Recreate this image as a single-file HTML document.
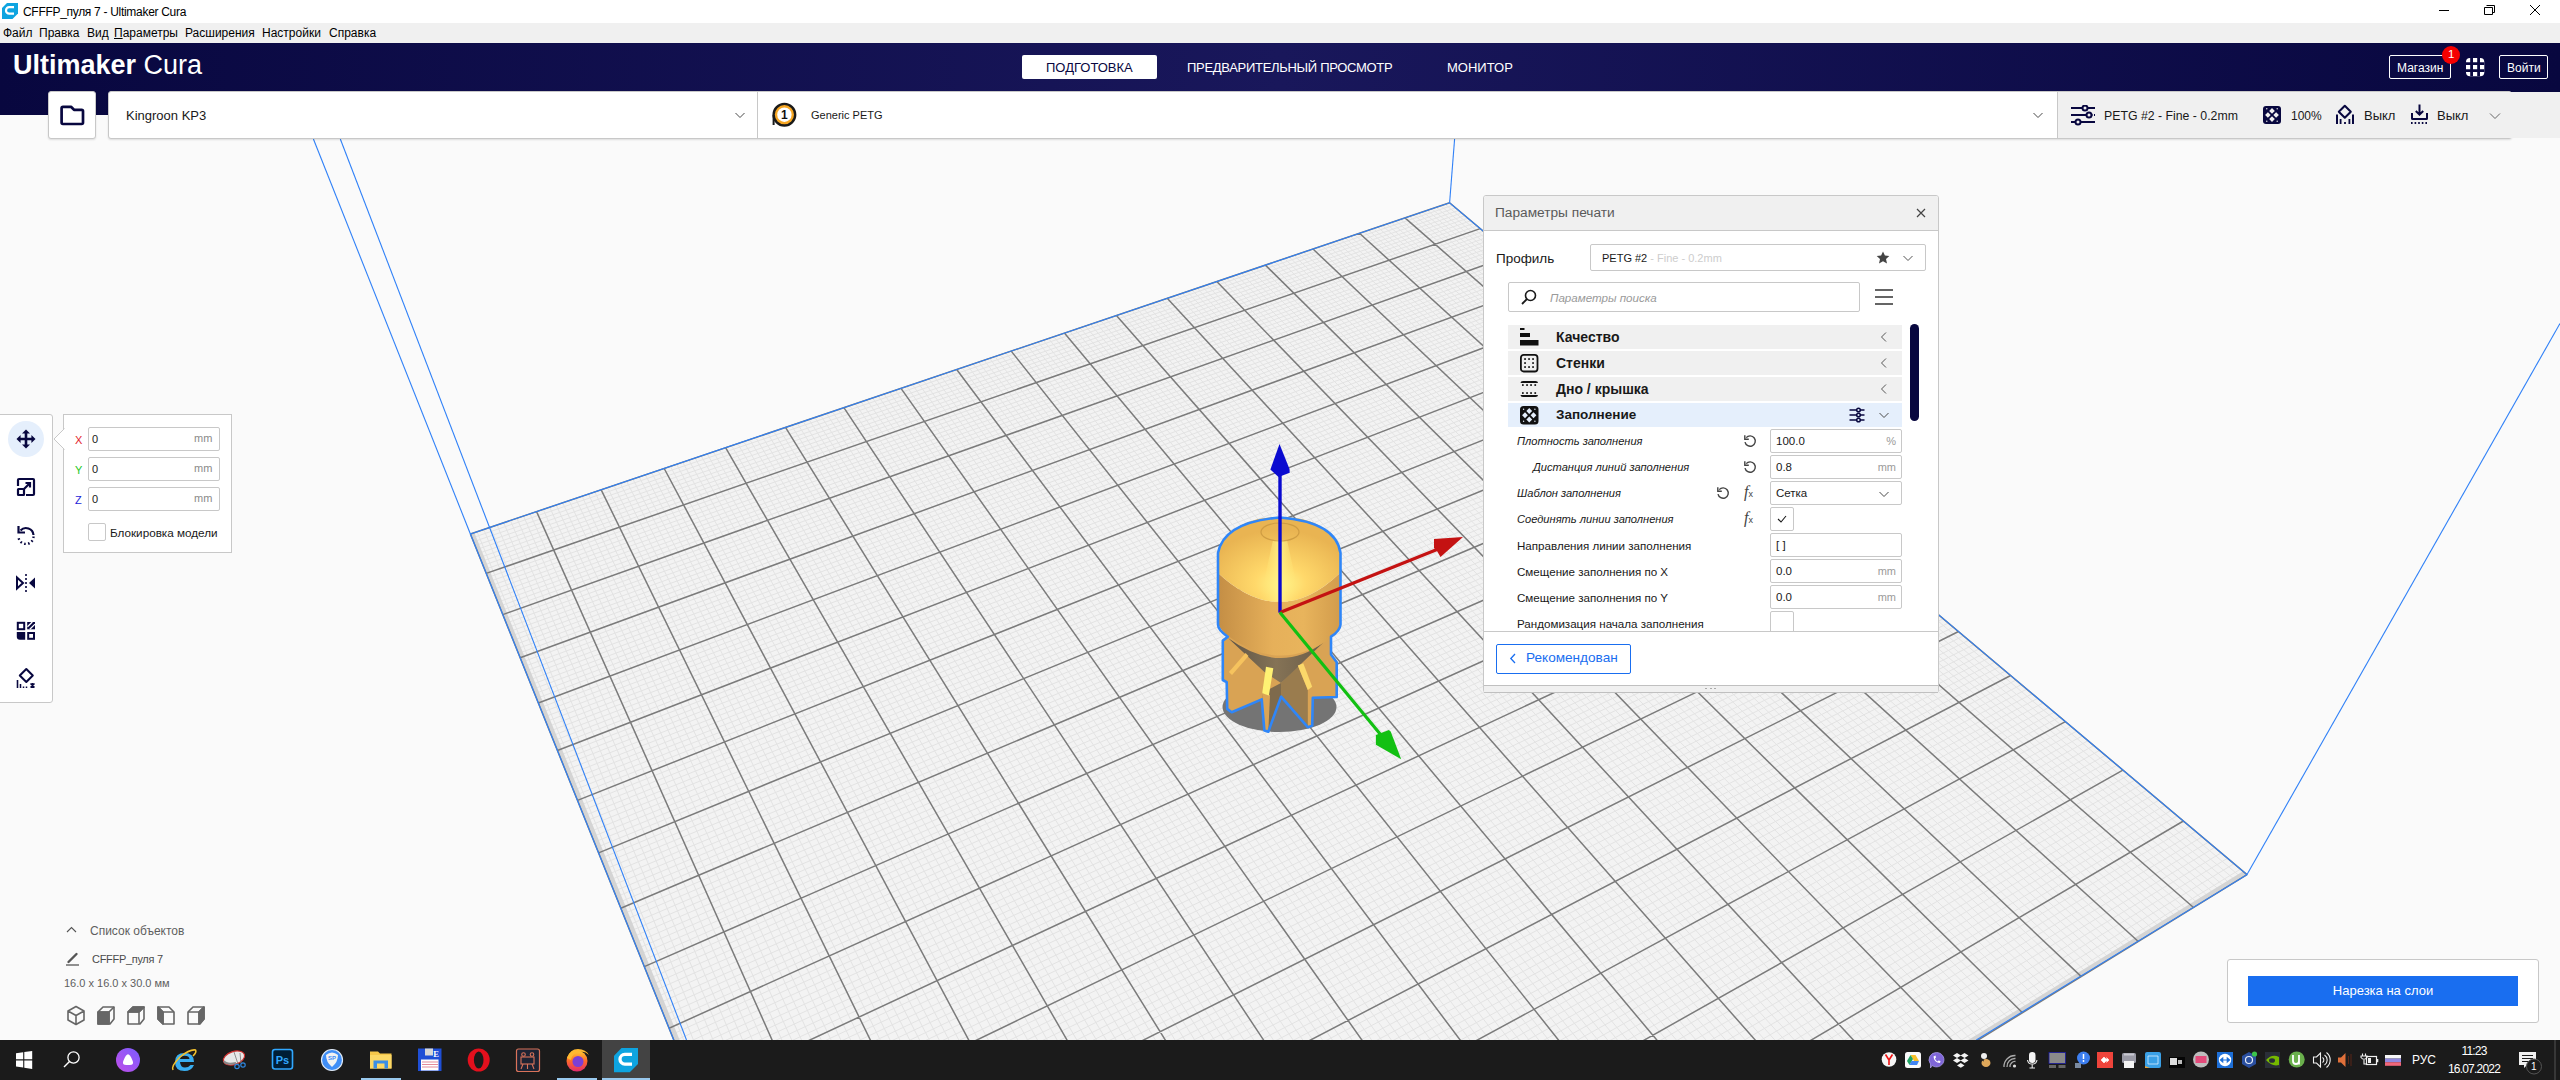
<!DOCTYPE html>
<html><head><meta charset="utf-8">
<style>
*{box-sizing:border-box;margin:0;padding:0}
html,body{width:2560px;height:1080px;overflow:hidden;background:#fafafa;font-family:"Liberation Sans",sans-serif;color:#191919}
.a{position:absolute}
.t{position:absolute;white-space:nowrap;line-height:1}
svg{display:block}
</style></head><body>
<!-- viewport -->
<svg class="a" style="left:0;top:0" width="2560" height="1080" viewBox="0 0 2560 1080">
 <rect x="0" y="0" width="2560" height="1080" fill="#fafafa"/>
 <polygon points="470.4,534.0 1449.6,202.8 2247.0,874.6 932.5,1683.6" fill="#f3f3f3"/>
 <path d="M477.1 531.7L942.6 1677.4M472.0 537.9L1452.6 205.3M483.8 529.5L952.7 1671.2M473.5 541.7L1455.6 207.9M490.5 527.2L962.7 1665.0M475.1 545.6L1458.7 210.4M497.1 525.0L972.7 1658.9M476.7 549.5L1461.7 213.0M503.7 522.7L982.6 1652.8M478.2 553.5L1464.8 215.6M510.4 520.5L992.5 1646.7M479.8 557.4L1467.8 218.2M516.9 518.3L1002.4 1640.6M481.4 561.4L1470.9 220.7M523.5 516.0L1012.2 1634.6M483.0 565.4L1474.0 223.3M530.1 513.8L1021.9 1628.6M484.6 569.4L1477.1 226.0M543.2 509.4L1041.3 1616.6M487.9 577.4L1483.3 231.2M549.7 507.2L1051.0 1610.7M489.5 581.5L1486.5 233.8M556.2 505.0L1060.6 1604.8M491.1 585.6L1489.6 236.5M562.7 502.8L1070.2 1598.9M492.8 589.7L1492.8 239.2M569.1 500.6L1079.7 1593.0M494.4 593.8L1495.9 241.8M575.6 498.4L1089.2 1587.2M496.1 597.9L1499.1 244.5M582.0 496.2L1098.6 1581.4M497.8 602.1L1502.3 247.2M588.4 494.1L1108.0 1575.6M499.4 606.2L1505.5 249.9M594.8 491.9L1117.4 1569.8M501.1 610.4L1508.7 252.6M607.6 487.6L1136.0 1558.3M504.5 618.8L1515.2 258.0M613.9 485.5L1145.3 1552.6M506.2 623.1L1518.4 260.8M620.3 483.3L1154.5 1547.0M507.9 627.4L1521.7 263.5M626.6 481.2L1163.7 1541.3M509.6 631.6L1525.0 266.3M632.9 479.0L1172.8 1535.7M511.4 635.9L1528.2 269.1M639.2 476.9L1181.9 1530.1M513.1 640.3L1531.5 271.8M645.4 474.8L1191.0 1524.5M514.9 644.6L1534.9 274.6M651.7 472.7L1200.0 1519.0M516.6 649.0L1538.2 277.4M657.9 470.6L1209.0 1513.4M518.4 653.4L1541.5 280.2M670.4 466.4L1226.9 1502.4M521.9 662.2L1548.2 285.9M676.6 464.3L1235.8 1497.0M523.7 666.7L1551.6 288.7M682.7 462.2L1244.6 1491.5M525.5 671.1L1555.0 291.6M688.9 460.1L1253.4 1486.1M527.3 675.6L1558.4 294.5M695.1 458.0L1262.2 1480.7M529.1 680.1L1561.8 297.3M701.2 455.9L1271.0 1475.3M531.0 684.7L1565.2 300.2M707.3 453.9L1279.7 1469.9M532.8 689.2L1568.7 303.1M713.4 451.8L1288.3 1464.6M534.6 693.8L1572.1 306.0M719.5 449.7L1297.0 1459.3M536.5 698.4L1575.6 308.9M731.6 445.6L1314.2 1448.7M540.2 707.7L1582.6 314.8M737.7 443.6L1322.7 1443.5M542.1 712.3L1586.1 317.8M743.7 441.6L1331.2 1438.2M544.0 717.0L1589.6 320.7M749.7 439.5L1339.7 1433.0M545.9 721.7L1593.1 323.7M755.7 437.5L1348.1 1427.8M547.8 726.5L1596.7 326.7M761.7 435.5L1356.5 1422.6M549.7 731.2L1600.2 329.7M767.7 433.5L1364.9 1417.5M551.6 736.0L1603.8 332.7M773.6 431.4L1373.2 1412.4M553.5 740.8L1607.4 335.7M779.5 429.4L1381.5 1407.3M555.5 745.7L1611.0 338.8M791.4 425.4L1398.0 1397.1M559.4 755.4L1618.2 344.9M797.3 423.4L1406.2 1392.0M561.4 760.3L1621.9 347.9M803.2 421.4L1414.4 1387.0M563.3 765.2L1625.5 351.0M809.0 419.5L1422.6 1382.0M565.3 770.2L1629.2 354.1M814.9 417.5L1430.7 1377.0M567.3 775.1L1632.9 357.2M820.7 415.5L1438.8 1372.0M569.3 780.1L1636.6 360.3M826.5 413.5L1446.8 1367.1M571.4 785.2L1640.3 363.5M832.4 411.6L1454.8 1362.1M573.4 790.2L1644.1 366.6M838.2 409.6L1462.8 1357.2M575.4 795.3L1647.8 369.8M849.7 405.7L1478.7 1347.4M579.5 805.5L1655.3 376.1M855.5 403.8L1486.6 1342.6M581.6 810.7L1659.1 379.3M861.2 401.8L1494.5 1337.7M583.7 815.9L1662.9 382.5M866.9 399.9L1502.3 1332.9M585.8 821.1L1666.8 385.8M872.6 397.9L1510.2 1328.1M587.9 826.3L1670.6 389.0M878.3 396.0L1517.9 1323.3M590.0 831.6L1674.5 392.2M884.0 394.1L1525.7 1318.5M592.1 836.9L1678.3 395.5M889.7 392.2L1533.4 1313.8M594.3 842.2L1682.2 398.8M895.4 390.3L1541.1 1309.0M596.4 847.5L1686.1 402.1M906.6 386.4L1556.4 1299.6M600.8 858.3L1694.0 408.7M912.3 384.5L1564.0 1294.9M602.9 863.7L1697.9 412.0M917.9 382.6L1571.6 1290.3M605.1 869.2L1701.9 415.3M923.5 380.8L1579.2 1285.6M607.3 874.7L1705.9 418.7M929.0 378.9L1586.7 1281.0M609.6 880.2L1709.9 422.1M934.6 377.0L1594.2 1276.4M611.8 885.7L1713.9 425.5M940.2 375.1L1601.7 1271.8M614.0 891.3L1717.9 428.9M945.7 373.2L1609.1 1267.2M616.3 896.9L1722.0 432.3M951.2 371.4L1616.5 1262.6M618.5 902.6L1726.0 435.7M962.2 367.6L1631.3 1253.6M623.1 913.9L1734.2 442.6M967.7 365.8L1638.6 1249.0M625.4 919.6L1738.3 446.1M973.2 363.9L1645.9 1244.5M627.7 925.4L1742.5 449.5M978.7 362.1L1653.2 1240.1M630.1 931.2L1746.6 453.0M984.1 360.2L1660.4 1235.6M632.4 937.0L1750.8 456.5M989.6 358.4L1667.7 1231.1M634.7 942.9L1755.0 460.1M995.0 356.6L1674.9 1226.7M637.1 948.7L1759.2 463.6M1000.4 354.7L1682.0 1222.3M639.5 954.6L1763.4 467.2M1005.8 352.9L1689.2 1217.9M641.9 960.6L1767.6 470.7M1016.6 349.3L1703.4 1209.1M646.7 972.6L1776.2 477.9M1021.9 347.5L1710.5 1204.8M649.1 978.6L1780.5 481.6M1027.3 345.6L1717.5 1200.5M651.6 984.7L1784.8 485.2M1032.6 343.8L1724.6 1196.1M654.0 990.8L1789.1 488.8M1037.9 342.0L1731.6 1191.8M656.5 997.0L1793.5 492.5M1043.2 340.2L1738.5 1187.5M659.0 1003.1L1797.8 496.2M1048.5 338.5L1745.5 1183.3M661.5 1009.4L1802.2 499.9M1053.8 336.7L1752.4 1179.0M664.0 1015.6L1806.6 503.6M1059.1 334.9L1759.3 1174.8M666.5 1021.9L1811.1 507.3M1069.6 331.3L1773.0 1166.3M671.6 1034.6L1820.0 514.8M1074.9 329.5L1779.8 1162.1M674.2 1041.0L1824.4 518.6M1080.1 327.8L1786.6 1157.9M676.8 1047.4L1829.0 522.4M1085.3 326.0L1793.4 1153.8M679.4 1053.9L1833.5 526.2M1090.5 324.3L1800.2 1149.6M682.0 1060.4L1838.0 530.0M1095.7 322.5L1806.9 1145.5M684.6 1066.9L1842.6 533.9M1100.9 320.7L1813.6 1141.3M687.3 1073.5L1847.2 537.7M1106.0 319.0L1820.3 1137.2M689.9 1080.1L1851.8 541.6M1111.2 317.3L1826.9 1133.1M692.6 1086.8L1856.4 545.5M1121.5 313.8L1840.2 1125.0M698.0 1100.2L1865.7 553.4M1126.6 312.0L1846.8 1120.9M700.7 1107.0L1870.4 557.3M1131.7 310.3L1853.4 1116.9M703.5 1113.8L1875.1 561.3M1136.8 308.6L1859.9 1112.8M706.2 1120.6L1879.8 565.3M1141.9 306.9L1866.4 1108.8M709.0 1127.5L1884.6 569.3M1147.0 305.2L1872.9 1104.8M711.8 1134.5L1889.4 573.3M1152.0 303.4L1879.4 1100.8M714.6 1141.4L1894.1 577.3M1157.1 301.7L1885.9 1096.9M717.4 1148.5L1899.0 581.4M1162.1 300.0L1892.3 1092.9M720.2 1155.5L1903.8 585.5M1172.2 296.6L1905.1 1085.0M726.0 1169.8L1913.5 593.7M1177.2 294.9L1911.5 1081.1M728.8 1176.9L1918.4 597.8M1182.2 293.2L1917.8 1077.2M731.7 1184.2L1923.4 601.9M1187.2 291.6L1924.1 1073.3M734.7 1191.4L1928.3 606.1M1192.1 289.9L1930.4 1069.4M737.6 1198.8L1933.3 610.3M1197.1 288.2L1936.7 1065.6M740.6 1206.1L1938.3 614.5M1202.1 286.5L1943.0 1061.7M743.5 1213.5L1943.3 618.7M1207.0 284.9L1949.2 1057.9M746.5 1221.0L1948.3 623.0M1211.9 283.2L1955.4 1054.0M749.6 1228.5L1953.4 627.2M1221.8 279.9L1967.8 1046.4M755.6 1243.6L1963.6 635.8M1226.7 278.2L1974.0 1042.6M758.7 1251.3L1968.7 640.2M1231.5 276.6L1980.1 1038.9M761.8 1258.9L1973.9 644.5M1236.4 274.9L1986.2 1035.1M764.9 1266.7L1979.1 648.9M1241.3 273.3L1992.3 1031.4M768.0 1274.5L1984.3 653.3M1246.1 271.6L1998.4 1027.6M771.2 1282.3L1989.5 657.7M1251.0 270.0L2004.4 1023.9M774.4 1290.2L1994.8 662.1M1255.8 268.3L2010.5 1020.2M777.5 1298.1L2000.0 666.5M1260.6 266.7L2016.5 1016.5M780.8 1306.1L2005.4 671.0M1270.2 263.5L2028.4 1009.1M787.2 1322.2L2016.0 680.0M1275.0 261.8L2034.4 1005.4M790.5 1330.4L2021.4 684.6M1279.8 260.2L2040.3 1001.8M793.8 1338.5L2026.8 689.1M1284.6 258.6L2046.3 998.1M797.1 1346.8L2032.3 693.7M1289.3 257.0L2052.2 994.5M800.4 1355.1L2037.7 698.3M1294.1 255.4L2058.0 990.9M803.8 1363.4L2043.2 702.9M1298.8 253.8L2063.9 987.3M807.2 1371.8L2048.7 707.6M1303.6 252.2L2069.7 983.7M810.6 1380.3L2054.3 712.2M1308.3 250.6L2075.5 980.1M814.0 1388.8L2059.8 716.9M1317.7 247.4L2087.1 973.0M820.9 1406.0L2071.1 726.4M1322.4 245.8L2092.9 969.4M824.4 1414.7L2076.7 731.1M1327.0 244.3L2098.6 965.9M827.9 1423.4L2082.4 735.9M1331.7 242.7L2104.4 962.4M831.5 1432.2L2088.1 740.7M1336.4 241.1L2110.1 958.9M835.0 1441.1L2093.8 745.6M1341.0 239.5L2115.8 955.4M838.6 1450.0L2099.6 750.4M1345.6 238.0L2121.4 951.9M842.2 1459.0L2105.4 755.3M1350.3 236.4L2127.1 948.4M845.8 1468.0L2111.2 760.2M1354.9 234.8L2132.7 944.9M849.5 1477.1L2117.1 765.1M1364.1 231.7L2143.9 938.0M856.9 1495.5L2128.8 775.0M1368.7 230.2L2149.5 934.6M860.6 1504.8L2134.8 780.1M1373.3 228.6L2155.1 931.2M864.4 1514.2L2140.7 785.1M1377.8 227.1L2160.6 927.8M868.2 1523.6L2146.7 790.1M1382.4 225.5L2166.1 924.4M872.0 1533.1L2152.8 795.2M1386.9 224.0L2171.7 921.0M875.8 1542.6L2158.8 800.3M1391.5 222.5L2177.1 917.6M879.7 1552.2L2164.9 805.4M1396.0 220.9L2182.6 914.2M883.6 1561.9L2171.0 810.6M1400.5 219.4L2188.1 910.9M887.5 1571.6L2177.2 815.8M1409.5 216.4L2198.9 904.2M895.4 1591.4L2189.6 826.2M1414.0 214.8L2204.4 900.8M899.4 1601.3L2195.8 831.5M1418.5 213.3L2209.7 897.5M903.5 1611.3L2202.1 836.8M1423.0 211.8L2215.1 894.2M907.5 1621.4L2208.4 842.1M1427.4 210.3L2220.5 890.9M911.6 1631.6L2214.8 847.4M1431.9 208.8L2225.8 887.6M915.7 1641.9L2221.2 852.8M1436.3 207.3L2231.1 884.4M919.9 1652.2L2227.6 858.2M1440.8 205.8L2236.4 881.1M924.1 1662.6L2234.0 863.7M1445.2 204.3L2241.7 877.8M928.3 1673.1L2240.5 869.1" stroke="#e3e3e3" stroke-width="1" fill="none"/>
 <polygon points="470.4,534.0 474.4,532.7 938.5,1679.9 932.5,1683.6" fill="#d4d4d4"/><polygon points="930.0,1677.3 2243.1,871.3 2247.0,874.6 932.5,1683.6" fill="#d4d4d4"/>
 <path d="M470.4 534.0L932.5 1683.6M470.4 534.0L1449.6 202.8M536.6 511.6L1031.7 1622.6M486.2 573.4L1480.2 228.6M601.2 489.8L1126.7 1564.1M502.8 614.6L1511.9 255.3M664.2 468.5L1218.0 1507.9M520.2 657.8L1544.9 283.1M725.6 447.7L1305.6 1454.0M538.3 703.0L1579.1 311.9M785.5 427.4L1389.8 1402.2M557.4 750.5L1614.6 341.8M843.9 407.7L1470.8 1352.3M577.5 800.4L1651.6 373.0M901.0 388.4L1548.8 1304.3M598.6 852.9L1690.0 405.4M956.7 369.5L1623.9 1258.1M620.8 908.2L1730.1 439.1M1011.2 351.1L1696.3 1213.5M644.3 966.6L1771.9 474.3M1064.4 333.1L1766.2 1170.5M669.1 1028.2L1815.5 511.1M1116.4 315.5L1833.6 1129.0M695.3 1093.5L1861.0 549.4M1167.2 298.3L1898.7 1089.0M723.1 1162.6L1908.7 589.5M1216.8 281.5L1961.6 1050.2M752.6 1236.0L1958.5 631.5M1265.4 265.1L2022.5 1012.8M784.0 1314.1L2010.7 675.5M1313.0 249.0L2081.3 976.6M817.4 1397.4L2065.4 721.6M1359.5 233.3L2138.3 941.5M853.2 1486.3L2122.9 770.1M1405.0 217.9L2193.5 907.5M891.4 1581.5L2183.4 821.0M1449.6 202.8L2247.0 874.6M932.5 1683.6L2247.0 874.6" stroke="#7b7b7b" stroke-width="1.5" fill="none"/>

 <!-- model -->
 <defs>
  <radialGradient id="dome" cx="0.5" cy="0.75" r="0.6" fx="0.52" fy="0.8">
   <stop offset="0" stop-color="#fff48a"/><stop offset="0.35" stop-color="#ffd86a"/><stop offset="1" stop-color="#e9b452"/>
  </radialGradient>
  <linearGradient id="band" x1="0" y1="0" x2="1" y2="0">
   <stop offset="0" stop-color="#c48e45"/><stop offset="0.45" stop-color="#e6b05a"/><stop offset="0.7" stop-color="#e8b45c"/><stop offset="1" stop-color="#d29c4c"/>
  </linearGradient>
  <linearGradient id="hl" x1="0" y1="0" x2="1" y2="0"><stop offset="0" stop-color="#ffe070" stop-opacity="0"/><stop offset="0.5" stop-color="#fff48a"/><stop offset="1" stop-color="#ffe070" stop-opacity="0"/></linearGradient>
  <linearGradient id="cone" x1="0" y1="0" x2="1" y2="0">
   <stop offset="0" stop-color="#5e5446"/><stop offset="0.5" stop-color="#857356"/><stop offset="1" stop-color="#6a5c48"/>
  </linearGradient>
 </defs>
 <ellipse cx="1279.5" cy="707" rx="57" ry="25" fill="#747474"/>
 <path d="M1222.8 640.6L1227.8 636.7L1331 636.7V654.4L1336.7 662.2V697L1312.8 697.8L1312.2 725.6L1307.8 727.2L1281.1 696.7L1268.3 731.7L1264.4 730.6L1261.7 699.4L1231.7 712.2L1227.2 708.9L1226.7 682.2L1222.8 680Z" fill="#d9a354"/>
 <path d="M1281 683L1297.8 665.6L1307.8 690L1307.8 727.2L1281.1 696.7Z" fill="#9a7c4e"/>
 
 <path d="M1262 693L1281 683L1281.1 696.7L1268.3 731.7L1264.4 730.6Z" fill="#7e6a4c"/>
 <path d="M1262 693L1270 695L1268.3 731.7L1264.4 730.6Z" fill="#dba455"/>
 <path d="M1228 638Q1280 676 1324 642L1281 683L1264.4 672Z" fill="url(#cone)"/>
 <path d="M1228.9 672L1245.6 653L1248.5 656L1232 675Z" fill="#f6c35e"/>
 <path d="M1266 666.7L1273.3 668.3L1268.9 695.6L1262.2 693.3Z" fill="#fff173"/>
 <path d="M1297.8 665.6L1303.3 663.3L1312.2 686.7L1307.8 690Z" fill="#fbd86a"/>
 <path d="M1218 573V624Q1222 632 1228 636Q1280 674 1331 638Q1340 630 1340 624V573Q1280 631 1218 573Z" fill="url(#band)"/>
 <path d="M1218 573V553Q1224 528 1258 519Q1280 515 1302 519Q1336 528 1340 553V573Q1280 631 1218 573Z" fill="url(#dome)"/>
 <path d="M1273 540L1287 540L1300 600Q1280 603 1260 600Z" fill="url(#hl)" opacity="0.85"/>
 <ellipse cx="1280" cy="532" rx="19" ry="9" fill="none" stroke="#c8963e" stroke-width="1.2" opacity="0.8"/>
 <path d="M1280 517.5Q1336 522 1340.5 553V624.5Q1340 631 1331 636.7V654.4L1336.7 662.2V697L1312.8 697.8L1312.2 725.6L1307.8 727.2L1281.1 696.7L1268.3 731.7L1264.4 730.6L1261.7 699.4L1231.7 712.2L1227.2 708.9L1226.7 682.2L1222.8 680V640.6L1227.8 636.7Q1218 630 1218 624.5V553Q1224 522 1280 517.5Z" fill="none" stroke="#2f86f8" stroke-width="2.6" stroke-linejoin="round"/>
 <!-- axes -->
 <path d="M1280 612.6V472" stroke="#0a0ad0" stroke-width="3.4"/>
 <path d="M1279.5 444L1289.5 469L1289.7 472.7L1278.5 477L1270.4 469.6Z" fill="#0a0ad0"/>
 <path d="M1280 612.6L1437 549.5" stroke="#c41212" stroke-width="3.2"/>
 <path d="M1463 537L1434 539V548L1437 551L1440.5 557Z" fill="#c41212"/>
 <path d="M1280 612.6L1383 737.5" stroke="#12c012" stroke-width="3.2"/>
 <path d="M1401.2 759.3L1375.9 744.7V735L1388.9 730.1L1390.8 731.8Z" fill="#12c012"/>
 <g stroke="#2f80f7" stroke-width="1.1" fill="none">
  <path d="M470.4 534L1449.6 202.8L2247 874.6L1976.3 1040"/>
  <path d="M470.4 534L673.8 1040"/>
  <path d="M470.4 534L313.4 139"/>
  <path d="M340.3 139L686.5 1040"/>
  <path d="M1449.6 202.8L1454.6 139"/>
  <path d="M2247 874.6L2560 323.5"/>
 </g>
</svg>

<!-- title bar -->
<div class="a" style="left:0;top:0;width:2560px;height:23px;background:#fff"></div>
<svg class="a" style="left:0;top:0" width="20" height="22" viewBox="0 0 20 22"><path d="M7 2.9H18V13.5L12.5 19H2V8Z" fill="#0ea4e0"/><path d="M14 7.2H9.2A3.2 3.2 0 0 0 9.2 13.6H14" stroke="#fff" stroke-width="2.2" fill="none"/></svg>
<div class="t" style="left:23px;top:6px;font-size:12px;letter-spacing:-0.3px;color:#000">CFFFP_пуля 7 - Ultimaker Cura</div>
<svg class="a" style="left:2430px;top:0" width="130" height="23" viewBox="0 0 130 23">
 <path d="M9 10.5H19" stroke="#000" stroke-width="1"/>
 <path d="M54.5 7.5H62.5V14.5H54.5Z M56.5 5.5H64.5V12.5H62.5" stroke="#000" stroke-width="1" fill="none"/>
 <path d="M100 5L110 15M110 5L100 15" stroke="#000" stroke-width="1"/>
</svg>

<!-- menu bar -->
<div class="a" style="left:0;top:23px;width:2560px;height:20px;background:#f0f0f0"></div>
<div class="t" style="left:3px;top:27px;font-size:12px;color:#000">Файл</div>
<div class="t" style="left:39px;top:27px;font-size:12px;color:#000">Правка</div>
<div class="t" style="left:87px;top:27px;font-size:12px;color:#000">Вид</div>
<div class="t" style="left:114px;top:27px;font-size:12px;color:#000"><u>П</u>араметры</div>
<div class="t" style="left:185px;top:27px;font-size:12px;color:#000">Расширения</div>
<div class="t" style="left:262px;top:27px;font-size:12px;color:#000">Настройки</div>
<div class="t" style="left:329px;top:27px;font-size:12px;color:#000">Справка</div>

<!-- header -->
<div class="a" style="left:0;top:43px;width:2560px;height:72px;background:linear-gradient(to right,#08073f 0%,#19175b 50%,#08073f 100%)"></div>
<div class="t" style="left:13px;top:52px;font-size:27px;color:#fff;font-weight:bold">Ultimaker <span style="font-weight:normal">Cura</span></div>
<div class="a" style="left:1022px;top:55px;width:135px;height:24px;background:#fff;border-radius:2px"></div>
<div class="t" style="left:1046px;top:61px;font-size:13px;color:#08073f">ПОДГОТОВКА</div>
<div class="t" style="left:1187px;top:61px;font-size:13px;letter-spacing:-0.3px;color:#fff">ПРЕДВАРИТЕЛЬНЫЙ ПРОСМОТР</div>
<div class="t" style="left:1447px;top:61px;font-size:13px;color:#fff">МОНИТОР</div>
<div class="a" style="left:2389px;top:55px;width:62px;height:24px;border:1px solid #fff;border-radius:2px"></div>
<div class="t" style="left:2397px;top:62px;font-size:12px;color:#fff">Магазин</div>
<div class="a" style="left:2442px;top:46px;width:18px;height:18px;border-radius:9px;background:#f60000"></div>
<div class="t" style="left:2448px;top:49px;font-size:11.5px;color:#fff">1</div>
<svg class="a" style="left:2466px;top:58px" width="19" height="19" viewBox="0 0 19 19"><rect x="0" y="0" width="18.3" height="18.3" rx="4" fill="#fff"/><path d="M5.6 0V18.3M12.6 0V18.3M0 5.6H18.3M0 12.6H18.3" stroke="#0a0841" stroke-width="2.8"/></svg>
<div class="a" style="left:2499px;top:55px;width:49px;height:24px;border:1px solid #fff;border-radius:2px"></div>
<div class="t" style="left:2507px;top:62px;font-size:12px;color:#fff">Войти</div>

<!-- toolbar cards -->

<div class="a" style="left:48px;top:91px;width:48px;height:48px;background:#fff;border:1px solid #c8c8c8;border-radius:3px;box-shadow:0 1px 2px rgba(0,0,0,0.12)"></div>
<svg class="a" style="left:60px;top:104px" width="25" height="23" viewBox="0 0 25 23"><path d="M1.6 4.2Q1.6 2.8 3 2.8H11L14 5.8H21.6Q23 5.8 23 7.2V18.6Q23 20 21.6 20H3Q1.6 20 1.6 18.6Z" fill="none" stroke="#08073f" stroke-width="2.7" stroke-linejoin="round"/></svg>
<div class="a" style="left:108px;top:91px;width:2404px;height:48px;background:#fff;border:1px solid #c8c8c8;border-radius:3px;box-shadow:0 1px 2px rgba(0,0,0,0.12)"></div>
<div class="a" style="left:757px;top:92px;width:1px;height:46px;background:#c8c8c8"></div>
<div class="a" style="left:2057px;top:92px;width:1454px;height:46px;background:#f0f0f0;border-left:1px solid #c8c8c8;border-radius:0 2px 2px 0"></div>
<div class="t" style="left:126px;top:109px;font-size:13px;color:#191919">Kingroon KP3</div>
<svg class="a" style="left:734px;top:111px" width="12" height="8" viewBox="0 0 12 8"><path d="M1.5 2L6 6.5L10.5 2" stroke="#4a4a4a" stroke-width="1" fill="none"/></svg>
<svg class="a" style="left:770px;top:100px" width="30" height="30" viewBox="0 0 30 30"><circle cx="14.4" cy="14.7" r="10.8" fill="#f6a623" stroke="#1a1a1a" stroke-width="2.4"/><circle cx="14.4" cy="14.7" r="7.2" fill="#fff"/><path d="M3.6 15V25" stroke="#1a1a1a" stroke-width="2"/><text x="14.4" y="19.2" font-size="12" font-weight="bold" text-anchor="middle" fill="#111" font-family="Liberation Sans">1</text></svg>
<div class="t" style="left:811px;top:110px;font-size:11px;color:#191919">Generic PETG</div>
<svg class="a" style="left:2032px;top:111px" width="12" height="8" viewBox="0 0 12 8"><path d="M1.5 2L6 6.5L10.5 2" stroke="#4a4a4a" stroke-width="1" fill="none"/></svg>
<svg class="a" style="left:2070px;top:105px" width="26" height="22" viewBox="0 0 26 22" stroke="#08073f" stroke-width="2" fill="none"><path d="M1 3H12.5M17.5 3H25M1 10H16.5M21.5 10H22.5M24 10H25M1 17H5.5M10.5 17H25"/><circle cx="15" cy="3" r="2.5"/><circle cx="19" cy="10" r="2.5"/><circle cx="8" cy="17" r="2.5"/></svg>
<div class="t" style="left:2104px;top:110px;font-size:12.3px;color:#191919">PETG #2 - Fine - 0.2mm</div>
<svg class="a" style="left:2263px;top:105.5px" width="18" height="18" viewBox="0 0 18 18"><rect x="0" y="0" width="18" height="18" rx="3" fill="#08073f"/><g fill="#f0f0f0"><path d="M9 2.1000000000000005L11.8 4.9L9 7.7L6.2 4.9Z"/><path d="M4.9 6.2L7.7 9L4.9 11.8L2.1000000000000005 9Z"/><path d="M13.1 6.2L15.899999999999999 9L13.1 11.8L10.3 9Z"/><path d="M9 10.3L11.8 13.1L9 15.899999999999999L6.2 13.1Z"/><circle cx="3.8" cy="2.8" r="0.7"/><circle cx="14.2" cy="2.8" r="0.7"/><circle cx="3.8" cy="15.2" r="0.7"/><circle cx="14.2" cy="15.2" r="0.7"/></g></svg>
<div class="t" style="left:2291px;top:110px;font-size:12px;color:#191919">100%</div>
<svg class="a" style="left:2335px;top:104px" width="20" height="21" viewBox="0 0 20 21" fill="none" stroke="#08073f" stroke-width="2"><path d="M9.8 1.8L15.8 7.8L9.8 13.8L3.8 7.8Z" stroke-linejoin="round"/><path d="M2 10.5V20M18 10.5V20" /><path d="M5.6 15V20M14.4 15V20" stroke-width="1.8"/><path d="M10 18V20" stroke-width="1.8"/></svg>
<div class="t" style="left:2364px;top:109px;font-size:13px;color:#191919">Выкл</div>
<svg class="a" style="left:2410px;top:104px" width="19" height="21" viewBox="0 0 19 21" fill="none" stroke="#08073f" stroke-width="2"><path d="M9.5 0.5V10.5M5.8 7L9.5 10.7L13.2 7"/><path d="M2 9V14.5Q2 15 2.5 15H16.5Q17 15 17 14.5V9"/><path d="M1 19H18.5" stroke-dasharray="1.6 2"/></svg>
<div class="t" style="left:2437px;top:109px;font-size:13px;color:#191919">Выкл</div>
<svg class="a" style="left:2489px;top:112px" width="12" height="8" viewBox="0 0 12 8"><path d="M1 1.5L6 6.5L11 1.5" stroke="#666" stroke-width="1" fill="none"/></svg>


<!-- tool panel -->

<div class="a" style="left:-4px;top:414px;width:57px;height:289px;background:#fff;border:1px solid #c8c8c8;border-radius:3px"></div>
<div class="a" style="left:8px;top:421px;width:36px;height:36px;border-radius:18px;background:#e5effc"></div>
<svg class="a" style="left:16px;top:429px" width="20" height="20" viewBox="0 0 20 20" fill="#08073f"><path d="M10 0.5L14 4.6H11.3V8.7H15.4V6L19.5 10L15.4 14V11.3H11.3V15.4H14L10 19.5L6 15.4H8.7V11.3H4.6V14L0.5 10L4.6 6V8.7H8.7V4.6H6Z"/></svg>
<svg class="a" style="left:16px;top:477px" width="20" height="20" viewBox="0 0 20 20" fill="none" stroke="#08073f" stroke-width="2.2"><path d="M2 9V3Q2 2 3 2H17Q18 2 18 3V17Q18 18 17 18H10"/><rect x="2" y="12" width="6" height="6" rx="0.5"/><path d="M8 12L14 6M9.5 6H14V10.5"/></svg>
<svg class="a" style="left:16px;top:524px" width="20" height="21" viewBox="0 0 20 21" fill="none" stroke="#08073f" stroke-width="2.2"><path d="M4.5 6.5A7.5 7.5 0 0 1 17.5 11"/><path d="M2.5 2V8.5H9" /><path d="M17.5 12.5A7.5 7.5 0 0 1 2.5 12.5" stroke-dasharray="1.6 2.4" stroke-width="2.4"/></svg>
<svg class="a" style="left:16px;top:573px" width="20" height="20" viewBox="0 0 20 20"><path d="M1 4.5L7 10L1 15.5Z" fill="none" stroke="#08073f" stroke-width="2"/><path d="M19 4.5L13 10L19 15.5Z" fill="#08073f"/><path d="M10 1V19" stroke="#08073f" stroke-width="1.6" stroke-dasharray="2 2"/></svg>
<svg class="a" style="left:16px;top:621px" width="20" height="20" viewBox="0 0 20 20" fill="#08073f"><rect x="1.8" y="1.8" width="6.4" height="6.4" fill="none" stroke="#08073f" stroke-width="2"/><path d="M11.2 1H19V8.3H11.2Z"/><path d="M11.5 5.8L16.3 1M13.8 8.3L19 3.1" stroke="#fff" stroke-width="1.3"/><path d="M0.8 11H9.2V18.8H3.8Q0.8 18.8 0.8 15.8Z"/><rect x="12.2" y="12" width="5.8" height="5.8" fill="none" stroke="#08073f" stroke-width="2"/></svg>
<svg class="a" style="left:16px;top:667px" width="21" height="22" viewBox="0 0 21 22" fill="none" stroke="#08073f" stroke-width="2"><path d="M10.3 2L16.8 8.5L10.3 15L3.8 8.5Z" stroke-linejoin="round"/><path d="M1.5 13V21" stroke-width="1.6"/><path d="M4.5 17V21M7.5 19.5V21M10.5 19.5V21" stroke-width="1.5"/><path d="M14.5 16.5L18.5 20.5M18.5 16.5L14.5 20.5M16.5 16V21" stroke-width="1.5"/></svg>

<div class="a" style="left:63px;top:414px;width:169px;height:139px;background:#fff;border:1px solid #c8c8c8"></div>
<svg class="a" style="left:53px;top:428px" width="12" height="22" viewBox="0 0 12 22"><path d="M11.5 0.5L1 11L11.5 21.5" fill="#fff" stroke="#c8c8c8" stroke-width="1"/></svg>
<div class="t" style="left:75px;top:435px;font-size:11px;color:#e3222b">X</div>
<div class="t" style="left:75px;top:465px;font-size:11px;color:#1ec81e">Y</div>
<div class="t" style="left:75px;top:495px;font-size:11px;color:#2323d8">Z</div>
<div class="a" style="left:88px;top:427px;width:132px;height:24px;border:1px solid #c8c8c8;border-radius:2px;background:#fff"></div>
<div class="a" style="left:88px;top:457px;width:132px;height:24px;border:1px solid #c8c8c8;border-radius:2px;background:#fff"></div>
<div class="a" style="left:88px;top:487px;width:132px;height:24px;border:1px solid #c8c8c8;border-radius:2px;background:#fff"></div>
<div class="t" style="left:92px;top:434px;font-size:11px;color:#191919">0</div>
<div class="t" style="left:92px;top:464px;font-size:11px;color:#191919">0</div>
<div class="t" style="left:92px;top:494px;font-size:11px;color:#191919">0</div>
<div class="t" style="left:194px;top:433px;font-size:11px;color:#8a8a8a">mm</div>
<div class="t" style="left:194px;top:463px;font-size:11px;color:#8a8a8a">mm</div>
<div class="t" style="left:194px;top:493px;font-size:11px;color:#8a8a8a">mm</div>
<div class="a" style="left:88px;top:523px;width:18px;height:18px;border:1px solid #c8c8c8;border-radius:2px;background:#fff"></div>
<div class="t" style="left:110px;top:527px;font-size:11.7px;color:#191919">Блокировка модели</div>


<!-- settings panel -->

<div class="a" style="left:1483px;top:195px;width:456px;height:498px;background:#fff;border:1px solid #c8c8c8;border-radius:3px"></div>
<div class="a" style="left:1484px;top:196px;width:454px;height:35px;background:#f0f0f0;border-bottom:1px solid #c8c8c8;border-radius:2px 2px 0 0"></div>
<div class="t" style="left:1495px;top:206px;font-size:13.7px;color:#5a5a5a">Параметры печати</div>
<svg class="a" style="left:1916px;top:208px" width="10" height="10" viewBox="0 0 10 10"><path d="M1 1L9 9M9 1L1 9" stroke="#444" stroke-width="1.2"/></svg>
<div class="t" style="left:1496px;top:252px;font-size:13.5px;color:#191919">Профиль</div>
<div class="a" style="left:1590px;top:244px;width:336px;height:27px;background:#fff;border:1px solid #c8c8c8;border-radius:2px"></div>
<div class="t" style="left:1602px;top:253px;font-size:11px;color:#191919">PETG #2 <span style="color:#cdcdcd">- Fine - 0.2mm</span></div>
<svg class="a" style="left:1876px;top:251px" width="14" height="13" viewBox="0 0 14 13"><path d="M7 0.5L8.9 4.6L13.3 5L10 8L11 12.5L7 10.2L3 12.5L4 8L0.7 5L5.1 4.6Z" fill="#444"/></svg>
<svg class="a" style="left:1902px;top:254px" width="12" height="8" viewBox="0 0 12 8"><path d="M1.5 2L6 6.5L10.5 2" stroke="#555" stroke-width="1" fill="none"/></svg>
<div class="a" style="left:1508px;top:282px;width:352px;height:30px;background:#fff;border:1px solid #c8c8c8;border-radius:2px"></div>
<svg class="a" style="left:1521px;top:289px" width="16" height="16" viewBox="0 0 16 16"><circle cx="9.5" cy="6.5" r="5" fill="none" stroke="#191919" stroke-width="1.6"/><path d="M6 10L1 15" stroke="#191919" stroke-width="1.8"/></svg>
<div class="t" style="left:1550px;top:292px;font-size:11.6px;font-style:italic;color:#9a9a9a">Параметры поиска</div>
<svg class="a" style="left:1875px;top:289px" width="18" height="16" viewBox="0 0 18 16"><path d="M0 1H18M0 8H18M0 15H18" stroke="#333" stroke-width="1.6"/></svg>
<div class="a" style="left:1910px;top:324px;width:9px;height:97px;border-radius:4.5px;background:#08073f"></div>
<div class="a" style="left:1508px;top:324.9px;width:394px;height:24px;background:#f0f0f0"></div>
<svg class="a" style="left:1520px;top:328px" width="19" height="18" viewBox="0 0 19 18" fill="#111"><rect x="0" y="0" width="4.5" height="2"/><rect x="0" y="5" width="10" height="4"/><rect x="0" y="12" width="18.5" height="5.5"/></svg>
<div class="t" style="left:1556px;top:330px;font-size:14px;font-weight:bold;color:#191919">Качество</div>
<svg class="a" style="left:1880px;top:331px" width="8" height="12" viewBox="0 0 8 12"><path d="M6 1.5L1.5 6L6 10.5" stroke="#555" stroke-width="1" fill="none"/></svg>
<div class="a" style="left:1508px;top:351px;width:394px;height:24px;background:#f0f0f0"></div>
<svg class="a" style="left:1520px;top:354px" width="19" height="19" viewBox="0 0 19 19"><rect x="0.9" y="0.9" width="16.6" height="16.6" rx="2.8" fill="none" stroke="#111" stroke-width="1.8"/><g fill="#111"><rect x="4.2" y="4.2" width="1.7" height="1.7"/><rect x="8.2" y="4.2" width="1.7" height="1.7"/><rect x="12.2" y="4.2" width="1.7" height="1.7"/><rect x="4.2" y="8.2" width="1.7" height="1.7"/><rect x="12.2" y="8.2" width="1.7" height="1.7"/><rect x="4.2" y="12.2" width="1.7" height="1.7"/><rect x="8.2" y="12.2" width="1.7" height="1.7"/><rect x="12.2" y="12.2" width="1.7" height="1.7"/></g></svg>
<div class="t" style="left:1556px;top:356px;font-size:14px;font-weight:bold;color:#191919">Стенки</div>
<svg class="a" style="left:1880px;top:357px" width="8" height="12" viewBox="0 0 8 12"><path d="M6 1.5L1.5 6L6 10.5" stroke="#555" stroke-width="1" fill="none"/></svg>
<div class="a" style="left:1508px;top:377px;width:394px;height:24px;background:#f0f0f0"></div>
<svg class="a" style="left:1520px;top:380px" width="19" height="19" viewBox="0 0 19 19"><path d="M0.5 3Q0.5 1 3 1H15.5Q18 1 18 3Z M0.5 15Q0.5 17 3 17H15.5Q18 17 18 15Z" fill="#111"/><g fill="#111"><rect x="1.9999999999999998" y="4.2" width="1.7" height="1.7"/><rect x="6.2" y="4.2" width="1.7" height="1.7"/><rect x="10.2" y="4.2" width="1.7" height="1.7"/><rect x="14.399999999999999" y="4.2" width="1.7" height="1.7"/><rect x="1.9999999999999998" y="12.2" width="1.7" height="1.7"/><rect x="6.2" y="12.2" width="1.7" height="1.7"/><rect x="10.2" y="12.2" width="1.7" height="1.7"/><rect x="14.399999999999999" y="12.2" width="1.7" height="1.7"/></g></svg>
<div class="t" style="left:1556px;top:382px;font-size:14px;font-weight:bold;color:#191919">Дно / крышка</div>
<svg class="a" style="left:1880px;top:383px" width="8" height="12" viewBox="0 0 8 12"><path d="M6 1.5L1.5 6L6 10.5" stroke="#555" stroke-width="1" fill="none"/></svg>
<div class="a" style="left:1508px;top:403px;width:394px;height:24px;background:#e5effc"></div>
<svg class="a" style="left:1520px;top:406px" width="19" height="19" viewBox="0 0 19 19"><rect x="0" y="0" width="18.5" height="18.5" rx="3.5" fill="#111"/><g fill="#e5effc"><path d="M9.25 2.1L12.15 5.0L9.25 7.9L6.35 5.0Z"/><path d="M5.0 6.35L7.9 9.25L5.0 12.15L2.1 9.25Z"/><path d="M13.5 6.35L16.4 9.25L13.5 12.15L10.6 9.25Z"/><path d="M9.25 10.6L12.15 13.5L9.25 16.4L6.35 13.5Z"/><circle cx="3.6" cy="3.2" r="0.7"/><circle cx="14.9" cy="3.2" r="0.7"/><circle cx="3.6" cy="15.3" r="0.7"/><circle cx="14.9" cy="15.3" r="0.7"/></g></svg>
<div class="t" style="left:1556px;top:408px;font-size:13.5px;font-weight:bold;color:#191919">Заполнение</div>

<svg class="a" style="left:1849px;top:407px" width="16" height="16" viewBox="0 0 16 16" stroke="#08073f" stroke-width="1.5" fill="none"><path d="M0.5 3H15.5M0.5 8H15.5M0.5 13H15.5"/><circle cx="9.5" cy="3" r="1.8" fill="#e5effc"/><circle cx="9.5" cy="8" r="1.8" fill="#e5effc"/><circle cx="9.5" cy="13" r="1.8" fill="#e5effc"/></svg>
<svg class="a" style="left:1878px;top:411px" width="12" height="8" viewBox="0 0 12 8"><path d="M1.5 2L6 6.5L10.5 2" stroke="#4a4a4a" stroke-width="1" fill="none"/></svg>
<div class="a" style="left:0;top:0;width:2560px;height:631px;overflow:hidden">
<div class="t" style="left:1517px;top:435.7px;font-size:11.1px;font-style:italic;color:#191919">Плотность заполнения</div>
<svg class="a" style="left:1743px;top:434px" width="14" height="14" viewBox="0 0 14 14" fill="none" stroke="#444" stroke-width="1.4"><path d="M3.2 3.6A5.2 5.2 0 1 1 2 8.2"/><path d="M1.8 1.2V5.2H5.8"/></svg>
<div class="a" style="left:1770px;top:429px;width:132px;height:24px;background:#fff;border:1px solid #c8c8c8;border-radius:2px"></div>
<div class="t" style="left:1776px;top:435.7px;font-size:11.5px;color:#191919">100.0</div>
<div class="t" style="right:664px;top:435.7px;font-size:11px;color:#9a9a9a">%</div>
<div class="t" style="left:1533px;top:461.7px;font-size:11.1px;font-style:italic;color:#191919">Дистанция линий заполнения</div>
<svg class="a" style="left:1743px;top:460px" width="14" height="14" viewBox="0 0 14 14" fill="none" stroke="#444" stroke-width="1.4"><path d="M3.2 3.6A5.2 5.2 0 1 1 2 8.2"/><path d="M1.8 1.2V5.2H5.8"/></svg>
<div class="a" style="left:1770px;top:455px;width:132px;height:24px;background:#fff;border:1px solid #c8c8c8;border-radius:2px"></div>
<div class="t" style="left:1776px;top:461.7px;font-size:11.5px;color:#191919">0.8</div>
<div class="t" style="right:664px;top:461.7px;font-size:11px;color:#9a9a9a">mm</div>
<div class="t" style="left:1517px;top:487.7px;font-size:11.1px;font-style:italic;color:#191919">Шаблон заполнения</div>
<svg class="a" style="left:1716px;top:486px" width="14" height="14" viewBox="0 0 14 14" fill="none" stroke="#444" stroke-width="1.4"><path d="M3.2 3.6A5.2 5.2 0 1 1 2 8.2"/><path d="M1.8 1.2V5.2H5.8"/></svg>
<div class="t" style="left:1744px;top:484px;font-family:'Liberation Serif',serif;font-style:italic;font-size:16px;color:#444">f<span style="font-size:9px;font-style:normal;font-family:'Liberation Sans'">x</span></div>
<div class="a" style="left:1770px;top:481px;width:132px;height:24px;background:#fff;border:1px solid #c8c8c8;border-radius:2px"></div>
<div class="t" style="left:1776px;top:487.7px;font-size:11.5px;color:#191919">Сетка</div>
<svg class="a" style="left:1878px;top:490px" width="12" height="8" viewBox="0 0 12 8"><path d="M1.5 2L6 6.5L10.5 2" stroke="#4a4a4a" stroke-width="1" fill="none"/></svg>
<div class="t" style="left:1517px;top:513.7px;font-size:11.1px;font-style:italic;color:#191919">Соединять линии заполнения</div>
<div class="t" style="left:1744px;top:510px;font-family:'Liberation Serif',serif;font-style:italic;font-size:16px;color:#444">f<span style="font-size:9px;font-style:normal;font-family:'Liberation Sans'">x</span></div>
<div class="a" style="left:1770px;top:507px;width:24px;height:24px;background:#fff;border:1px solid #c8c8c8;border-radius:2px"></div>
<svg class="a" style="left:1776px;top:514px" width="12" height="10" viewBox="0 0 12 10"><path d="M2 5L5 8L10 2" stroke="#191919" stroke-width="1.1" fill="none"/></svg>
<div class="t" style="left:1517px;top:539.7px;font-size:11.6px;color:#191919">Направления линии заполнения</div>
<div class="a" style="left:1770px;top:533px;width:132px;height:24px;background:#fff;border:1px solid #c8c8c8;border-radius:2px"></div>
<div class="t" style="left:1776px;top:539.7px;font-size:11.5px;color:#191919">[ ]</div>
<div class="t" style="left:1517px;top:565.7px;font-size:11.6px;color:#191919">Смещение заполнения по X</div>
<div class="a" style="left:1770px;top:559px;width:132px;height:24px;background:#fff;border:1px solid #c8c8c8;border-radius:2px"></div>
<div class="t" style="left:1776px;top:565.7px;font-size:11.5px;color:#191919">0.0</div>
<div class="t" style="right:664px;top:565.7px;font-size:11px;color:#9a9a9a">mm</div>
<div class="t" style="left:1517px;top:591.7px;font-size:11.6px;color:#191919">Смещение заполнения по Y</div>
<div class="a" style="left:1770px;top:585px;width:132px;height:24px;background:#fff;border:1px solid #c8c8c8;border-radius:2px"></div>
<div class="t" style="left:1776px;top:591.7px;font-size:11.5px;color:#191919">0.0</div>
<div class="t" style="right:664px;top:591.7px;font-size:11px;color:#9a9a9a">mm</div>
<div class="t" style="left:1517px;top:617.7px;font-size:11.6px;color:#191919">Рандомизация начала заполнения</div>
<div class="a" style="left:1770px;top:611px;width:24px;height:24px;background:#fff;border:1px solid #c8c8c8;border-radius:2px"></div>
</div>

<div class="a" style="left:1484px;top:631px;width:454px;height:1px;background:#c8c8c8"></div>
<div class="a" style="left:1496px;top:644px;width:135px;height:30px;border:1.5px solid #196ef0;border-radius:2px"></div>
<svg class="a" style="left:1509px;top:653px" width="8" height="11" viewBox="0 0 8 11"><path d="M6 1L1.8 5.5L6 10" stroke="#196ef0" stroke-width="1.3" fill="none"/></svg>
<div class="t" style="left:1526px;top:651px;font-size:13.6px;color:#196ef0">Рекомендован</div>
<div class="a" style="left:1484px;top:685px;width:454px;height:8px;background:#f0f0f0;border-top:1px solid #c0c0c0;border-bottom:1px solid #c0c0c0"></div>
<div class="a" style="left:1705px;top:688px;width:2px;height:1px;background:#aaa"></div>
<div class="a" style="left:1710px;top:688px;width:2px;height:1px;background:#aaa"></div>
<div class="a" style="left:1714px;top:688px;width:2px;height:1px;background:#aaa"></div>


<!-- object list -->

<svg class="a" style="left:66px;top:926px" width="11" height="7" viewBox="0 0 11 7"><path d="M1 6L5.5 1.5L10 6" stroke="#555" stroke-width="1.1" fill="none"/></svg>
<div class="t" style="left:90px;top:925px;font-size:12px;color:#5f5f5f">Список объектов</div>
<svg class="a" style="left:65px;top:951px" width="15" height="15" viewBox="0 0 15 15"><path d="M3.5 11L11.5 3" stroke="#555" stroke-width="2.4" stroke-linecap="round"/><path d="M1 14H14" stroke="#555" stroke-width="1.3"/></svg>
<div class="t" style="left:92px;top:954px;font-size:11px;letter-spacing:-0.3px;color:#4a4a4a">CFFFP_пуля 7</div>
<div class="t" style="left:64px;top:978px;font-size:11px;color:#5f5f5f">16.0 x 16.0 x 30.0 мм</div>
<svg class="a" style="left:66px;top:1005px" width="145" height="22" viewBox="0 0 145 22" fill="none" stroke="#666" stroke-width="1.6" stroke-linejoin="round">
 <path d="M10 1.5L18 6V15L10 19.5L2 15V6Z M2 6L10 10.5L18 6 M10 10.5V19.5"/>
 <g transform="translate(30 0)"><path d="M7 2H18V14L14 19H2V7Z" /><path d="M2 7H13L18 2 M13 7V19"/><path d="M2 7H13V19H2Z" fill="#666"/></g>
 <g transform="translate(60 0)"><path d="M7 2H18V14L14 19H2V7Z" /><path d="M2 7H13L18 2 M13 7V19"/><path d="M2 7L7 2H18L13 7Z" fill="#666"/></g>
 <g transform="translate(90 0)"><path d="M2 2H13L18 7V19H7L2 14Z" /><path d="M7 7H18 M7 7V19 M7 7L2 2"/><path d="M2 2L7 7V19L2 14Z" fill="#666"/></g>
 <g transform="translate(120 0)"><path d="M7 2H18V14L14 19H2V7Z" /><path d="M2 7H13L18 2 M13 7V19"/><path d="M13 7L18 2V14L13 19Z" fill="#666"/></g>
</svg>


<!-- slice -->

<div class="a" style="left:2227px;top:959px;width:312px;height:64px;background:#fff;border:1px solid #c8c8c8;border-radius:3px"></div>
<div class="a" style="left:2248px;top:976px;width:270px;height:30px;background:#196ef0"></div>
<div class="t" style="left:2248px;top:984px;width:270px;text-align:center;font-size:13px;color:#fff">Нарезка на слои</div>


<!-- taskbar -->

<div class="a" style="left:0;top:1040px;width:2560px;height:40px;background:#1b1b1b"></div>
<div class="a" style="left:602px;top:1040px;width:48px;height:40px;background:#434343"></div>
<div class="a" style="left:361px;top:1078px;width:40px;height:2px;background:#99c9ee"></div>
<div class="a" style="left:557px;top:1078px;width:40px;height:2px;background:#99c9ee"></div>
<div class="a" style="left:602px;top:1078px;width:48px;height:2px;background:#99c9ee"></div>
<svg class="a" style="left:0;top:1040px" width="660" height="40" viewBox="0 0 660 40">
 <g fill="#fff"><path d="M16 13.2L23.2 12.2V19.3H16Z M24.3 12L32.2 10.9V19.3H24.3Z M16 20.4H23.2V27.6L16 26.6Z M24.3 20.4H32.2V28.9L24.3 27.8Z"/></g>
 <circle cx="73.5" cy="17.5" r="5.6" fill="none" stroke="#fff" stroke-width="1.3"/><path d="M69.5 21.5L64 27" stroke="#fff" stroke-width="1.4"/>
 <defs><linearGradient id="al" x1="0" y1="1" x2="1" y2="0"><stop offset="0" stop-color="#c04ee8"/><stop offset="1" stop-color="#7a5cff"/></linearGradient>
 <linearGradient id="ff" x1="0" y1="0" x2="0" y2="1"><stop offset="0" stop-color="#ffcf33"/><stop offset="0.5" stop-color="#ff6a2a"/><stop offset="1" stop-color="#e02a6e"/></linearGradient></defs>
 <circle cx="128" cy="20" r="12" fill="url(#al)"/><path d="M128 14.3Q130 14.3 132.5 20.5Q134 24 131.5 24.7Q128 25.5 124.5 24.7Q122 24 123.5 20.5Q126 14.3 128 14.3Z" fill="#fff"/>
 <path d="M175 22Q175 13 184.5 13Q194 13 194 22H180Q180.5 27.5 185 27.5Q188.5 27.5 190.5 25H194Q191.5 31 184.5 31Q175 31 175 22Z M180 19H189.5Q189 15.7 184.7 15.7Q180.5 15.7 180 19Z" fill="#39aef0"/>
 <path d="M173 30Q171 26 180 17Q190 9 195.5 10Q197 12 193 16" stroke="#f2c12e" stroke-width="1.6" fill="none"/>
 <ellipse cx="234" cy="18" rx="11" ry="6.5" transform="rotate(-18 234 18)" fill="#e8e8e8" stroke="#d0302f" stroke-width="1.2"/><path d="M224 21Q226 25 236 23" stroke="#888" stroke-width="2" fill="none"/><circle cx="237" cy="26.5" r="2.2" fill="none" stroke="#2e86de" stroke-width="1.2"/><circle cx="243" cy="25" r="2.2" fill="none" stroke="#2e86de" stroke-width="1.2"/><path d="M234 12L238 24M240 13L241 23" stroke="#777" stroke-width="0.8"/>
 <rect x="272.5" y="9.5" width="20" height="19.5" rx="2.5" fill="#001e36" stroke="#31a8ff" stroke-width="1.6"/><text x="282.5" y="24" font-size="11" font-weight="bold" text-anchor="middle" fill="#31a8ff" font-family="Liberation Sans">Ps</text>
 <circle cx="332" cy="20" r="10.5" fill="#3f8ef7" stroke="#dfe9f5" stroke-width="1.2"/><path d="M326 15Q332 10 338 15Q338 22 332 27Q326 22 326 15Z" fill="#f2f2f2"/><text x="332" y="20" font-size="6" font-weight="bold" text-anchor="middle" fill="#3f8ef7" font-family="Liberation Sans">SP</text>
 <path d="M370 11.5H378L380 13.5H391.5V28.5H370Z" fill="#f5c74a"/><rect x="370" y="15" width="21.5" height="13.5" fill="#fbd866"/><path d="M373.5 28.5V20.5H388V28.5H384.5V23.5H377V28.5Z" fill="#3a8ee6"/>
 <rect x="418" y="8.5" width="23.5" height="22.5" fill="#1f4fd6"/><rect x="421" y="19.5" width="17.5" height="11" fill="#fff"/><path d="M422 22H438M422 24.5H438M422 27H438" stroke="#e38b9a" stroke-width="1.2"/><rect x="425" y="8.5" width="8" height="7" fill="#d8d8d8"/><text x="436" y="16.5" font-size="8.5" font-weight="bold" text-anchor="middle" fill="#fff" font-family="Liberation Serif">E</text>
 <ellipse cx="478.7" cy="20" rx="11" ry="11.5" fill="#e3101d"/><ellipse cx="478.7" cy="20" rx="4.8" ry="8.6" fill="#1b1b1b"/>
 <rect x="516.5" y="9" width="23" height="22.5" rx="2" fill="#1d2333" stroke="#d9735a" stroke-width="1.2"/><g stroke="#d9735a" stroke-width="1.1" fill="none"><circle cx="523.5" cy="14.5" r="1.8"/><circle cx="532" cy="14.5" r="1.8"/><rect x="521" y="17" width="13" height="7"/><path d="M523 24L521 29M532 24L534 29M527.5 24V29"/></g>
 <circle cx="577" cy="21" r="10.5" fill="url(#ff)"/><circle cx="578" cy="21.5" r="5.5" fill="#7b3fd6"/><path d="M567 18Q570 9 578 9Q586 9.5 589 15Q585 11 580 12Q572 13 571 20Z" fill="#ffb930"/>
 <path d="M621.5 8H638V23.9L629.75 32.15H614V15.65Z" fill="#0ea4e0"/><path d="M632 14.45H624.8A4.8 4.8 0 0 0 624.8 24.05H632" stroke="#fff" stroke-width="3.3" fill="none"/>
</svg>

<svg class="a" style="left:1870px;top:1040px" width="690" height="40" viewBox="1870 0 690 40">
 <circle cx="1889" cy="19.5" r="7.3" fill="#f5f5f5"/><path d="M1885.5 14.5L1889 20V25M1892.5 14.5L1889 20" stroke="#e11" stroke-width="1.6" fill="none"/>
 <rect x="1905" y="12" width="16" height="16" rx="2.5" fill="#fafafa"/><path d="M1910.5 15H1915.5L1919 21H1914Z" fill="#f6c02a"/><path d="M1910.5 15L1907 21L1909.5 25L1913 19Z" fill="#1fa463"/><path d="M1909.5 25H1917L1919 21H1911.5Z" fill="#4285f4"/>
 <path d="M1936.5 12.5A7.5 7.2 0 1 1 1932 25.5L1930.5 28V24A7.5 7.2 0 0 1 1936.5 12.5Z" fill="#7f66d8" stroke="#a89ae8" stroke-width="0.8"/><path d="M1933.5 16.5Q1934 23 1940 23L1940.5 21L1938.5 20.5L1937.5 21.5Q1935.5 20.5 1935 18.5L1936 17.5L1935.5 15.5Z" fill="#fff"/>
 <g fill="#f4f4f4"><path d="M1957 13L1961 15.5L1957 18L1953 15.5Z M1964.5 13L1968.5 15.5L1964.5 18L1960.5 15.5Z M1957 18L1961 20.5L1957 23L1953 20.5Z M1964.5 18L1968.5 20.5L1964.5 23L1960.5 20.5Z M1960.8 23L1964.5 25.5L1960.8 27.7L1957 25.5Z"/></g>
 <circle cx="1984" cy="16" r="3" fill="#eee"/><ellipse cx="1986" cy="23" rx="4.5" ry="4" fill="#e0a85a"/><path d="M1980 19L1984 21" stroke="#222" stroke-width="1"/>
 <g stroke="#aaa" stroke-width="1.3" fill="none"><path d="M2004 27A11 11 0 0 1 2015.5 15.5"/><path d="M2007 27A8 8 0 0 1 2015.5 18.5"/><path d="M2010 27A5 5 0 0 1 2015.5 21.5"/></g><circle cx="2014.5" cy="26" r="1.6" fill="#ddd"/>
 <rect x="2029" y="12" width="6.5" height="11" rx="3.2" fill="#f4f4f4"/><path d="M2027.5 20A4.8 4.8 0 0 0 2037 20M2032.2 25V28M2029.5 28H2035" stroke="#eee" stroke-width="1.1" fill="none"/>
 <rect x="2049" y="12.5" width="16.5" height="11" fill="#8a8a8a" stroke="#1a1aa0" stroke-width="0.8"/><rect x="2049" y="25" width="7" height="3" fill="#666"/><rect x="2058.5" y="25" width="7" height="3" fill="#666"/>
 <circle cx="2083.5" cy="18" r="6.5" fill="#3d7ff0"/><path d="M2083.5 14V19" stroke="#fff" stroke-width="1.5"/><circle cx="2083.5" cy="21" r="0.9" fill="#fff"/><rect x="2075" y="23" width="6" height="5" fill="#7a8aa0"/>
 <rect x="2097" y="12" width="16" height="16" fill="#ef443b"/><path d="M2101 20L2104 17L2107 20L2104 23Z M2106.5 17.5L2109 20L2106.5 22.5" fill="#fff" stroke="#fff" stroke-width="0.6"/>
 <rect x="2122" y="13" width="14" height="10" rx="1.5" fill="#9a9aa6"/><rect x="2124" y="21" width="10" height="7" fill="#f4f4f4"/><rect x="2124" y="13.5" width="10" height="2" fill="#c8c8d0"/>
 <rect x="2145" y="12" width="16" height="16" rx="2" fill="#3aa0e6"/><path d="M2148 16H2158V24H2148Z" fill="none" stroke="#d9efff" stroke-width="0.8"/><path d="M2145 26L2150 28H2145Z" fill="#e8a33a"/>
 <rect x="2169" y="17" width="16" height="11" fill="#050505"/><path d="M2170 18H2177V25H2170Z" fill="#ddd"/><path d="M2178 20H2182V24H2178Z" fill="#bbb"/>
 <circle cx="2201" cy="19.5" r="8" fill="#bdbdbd"/><rect x="2195.5" y="16" width="11" height="7" fill="#e34a7a"/>
 <rect x="2217" y="12" width="16" height="16" fill="#1d6fd8"/><circle cx="2225" cy="20" r="6.2" fill="#fff"/><path d="M2220.5 20H2229.5M2220.5 20L2222.7 18V22ZM2229.5 20L2227.3 18V22Z" fill="#1d6fd8" stroke="#1d6fd8" stroke-width="1.2"/>
 <path d="M2249 12L2256 16V24L2249 28L2242 24V16Z" fill="#2a4fa0"/><circle cx="2249" cy="20" r="3.5" fill="none" stroke="#e8eef8" stroke-width="1.2"/><circle cx="2254.5" cy="14" r="2.6" fill="#3bc44b"/>
 <rect x="2265" y="12" width="15" height="16" fill="#2a2f38"/><path d="M2266 20Q2272 13.5 2279 17V25Q2272 27 2266 20Z" fill="#76b900"/><ellipse cx="2272" cy="20.5" rx="3" ry="2.3" fill="#2a2f38"/>
 <circle cx="2296.7" cy="19.5" r="8" fill="#6ab04c"/><path d="M2293 15V21Q2293 24 2296 24Q2299 24 2299 21V15M2299 21V24.5" stroke="#fff" stroke-width="1.8" fill="none"/>
 <path d="M2313.5 17H2316.5L2320.5 13V27L2316.5 23H2313.5Z" fill="none" stroke="#f0f0f0" stroke-width="1.1"/><path d="M2322.5 17.5A3 3 0 0 1 2322.5 22.5M2324.5 15A6 6 0 0 1 2324.5 25M2326.5 12.5A9.5 9.5 0 0 1 2326.5 27.5" stroke="#f0f0f0" stroke-width="1.1" fill="none"/>
 <path d="M2338 17.5H2341L2345.5 13V27L2341 22.5H2338Z" fill="#e0703a"/><path d="M2348.5 16V24M2351 14V26" stroke="#6a2a18" stroke-width="0.8"/>
 <path d="M2362.5 13.5V16M2365.5 13.5V16M2361 16H2367V17.5Q2364 21 2361 17.5Z M2364 20V24H2367" stroke="#f0f0f0" stroke-width="1.1" fill="none"/><rect x="2366.5" y="16.5" width="10" height="8" fill="none" stroke="#f0f0f0" stroke-width="1.2"/><rect x="2368" y="18" width="3" height="5" fill="#f0f0f0"/><rect x="2377" y="19" width="1.3" height="3.2" fill="#f0f0f0"/>
 <rect x="2385" y="15" width="16" height="3.6" fill="#f8f8f8"/><rect x="2385" y="18.6" width="16" height="3.6" fill="#9088e0"/><rect x="2385" y="22.2" width="16" height="3.6" fill="#f0667a"/>
 <rect x="2554.5" y="0" width="1" height="40" fill="#555"/>
 <path d="M2519 12H2536V25H2527L2524 28V25H2519Z" fill="#f0f0f0"/><path d="M2522 15.5H2533M2522 18.5H2533M2522 21.5H2530" stroke="#1b1b1b" stroke-width="1"/>
 <circle cx="2534" cy="26.5" r="7.5" fill="#1b1b1b" stroke="#555" stroke-width="1"/>
</svg>
<div class="t" style="left:2412px;top:1054px;font-size:12px;color:#fff">РУС</div>
<div class="t" style="left:2449px;top:1045px;width:50px;text-align:center;font-size:12px;letter-spacing:-0.8px;color:#fff">11:23</div>
<div class="t" style="left:2444px;top:1063px;width:60px;text-align:center;font-size:12px;letter-spacing:-0.8px;color:#fff">16.07.2022</div>
<div class="t" style="left:2531px;top:1062px;font-size:10px;color:#fff">1</div>

</body></html>
